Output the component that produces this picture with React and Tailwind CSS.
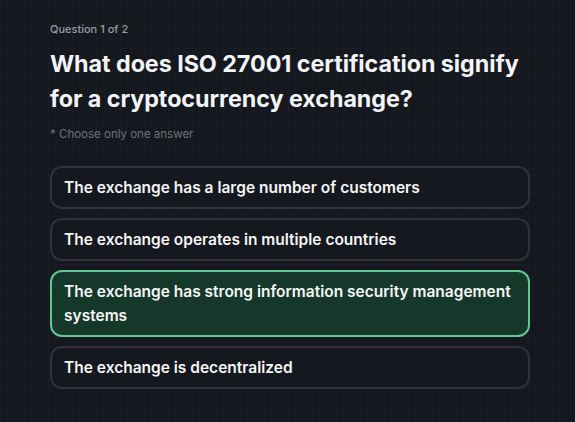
const options = [
  { id: 1, text: "The exchange has a large number of customers" },
  { id: 2, text: "The exchange operates in multiple countries" },
  {
    id: 3,
    text: "The exchange has strong information security management systems",
  },
  { id: 4, text: "The exchange is decentralized" },
];

export default function App() {
  const selected = 3;

  return (
    <div
      className="min-h-[422px] w-full bg-[#16181f] bg-[linear-gradient(to_right,rgba(255,255,255,0.02)_1px,transparent_1px),linear-gradient(to_bottom,rgba(255,255,255,0.02)_1px,transparent_1px)] bg-[size:24px_24px] pl-[50px] pt-[21px] text-white"
      style={{ fontFamily: "Inter, 'Noto Sans', sans-serif" }}
    >
      <div className="w-[480px]">
        <p className="text-[11px] font-medium leading-4 text-[#9a9ca6]">
          Question 1 of 2
        </p>
        <h1 className="mt-[9px] text-[23.3px] font-bold leading-[35px] tracking-[-0.05px] text-[#f3f4f6]">
          What does ISO 27001 certification signify for a cryptocurrency
          exchange?
        </h1>
        <p className="mt-[10px] text-[11.5px] leading-4 text-[#6f727c]">
          * Choose only one answer
        </p>

        <div className="mt-[24px] flex flex-col gap-[9px]">
          {options.map((o) => (
            <button
              key={o.id}
              className={
                o.id === selected
                  ? "rounded-[12px] border-2 border-[#62c795] bg-[#15382a] px-[12px] pt-[8px] pb-[7px] text-left text-[15.5px] font-semibold leading-[24px] text-[#f5f5f5]"
                  : "rounded-[12px] border-2 border-[#31333b] bg-[#16181f] px-[12px] pt-[8px] pb-[7px] text-left text-[15.5px] font-semibold leading-[24px] text-[#f5f5f5]"
              }
            >
              {o.text}
            </button>
          ))}
        </div>
      </div>
    </div>
  );
}
